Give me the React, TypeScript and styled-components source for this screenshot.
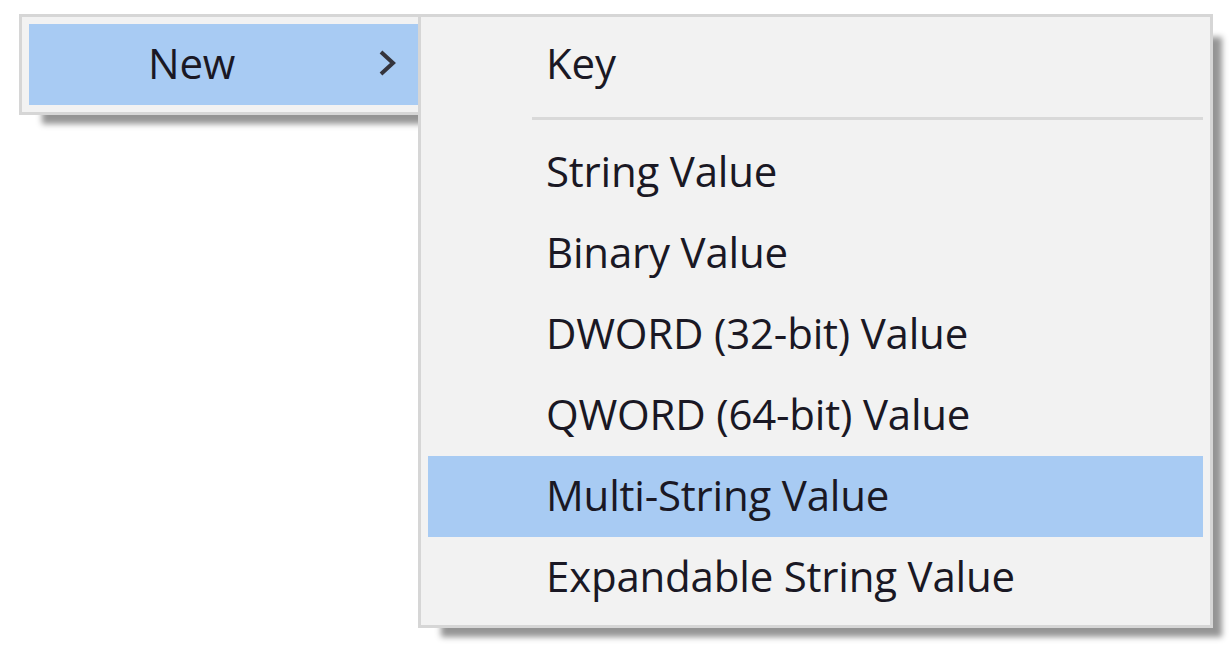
import { FunctionComponent } from "react";
import styled, { createGlobalStyle } from "styled-components";

const GlobalStyle = createGlobalStyle`
  html, body {
    margin: 0;
    padding: 0;
    background: #ffffff;
  }
  body {
    font-family: "Open Sans", "Noto Sans", "Liberation Sans", sans-serif;
  }
`;

const subItems = [
  "String Value",
  "Binary Value",
  "DWORD (32-bit) Value",
  "QWORD (64-bit) Value",
  "Multi-String Value",
  "Expandable String Value",
];

const ACTIVE = "Multi-String Value";

const Chevron = () => (
  <svg width="22" height="30" viewBox="0 0 22 30" fill="none">
    <polyline
      points="5,4 17,15 5,26"
      stroke="#34343c"
      strokeWidth="4"
      strokeLinejoin="miter"
      strokeLinecap="butt"
    />
  </svg>
);

const App: FunctionComponent = () => {
  return (
    <>
      <GlobalStyle />
      <Desktop>
        <ParentMenu>
          <MenuRow $active $withArrow>
            <span className="label">New</span>
            <span className="arrow">
              <Chevron />
            </span>
          </MenuRow>
        </ParentMenu>
        <SubMenu>
          <MenuRow>
            <span className="label">Key</span>
          </MenuRow>
          <Separator />
          {subItems.map((item) => (
            <MenuRow key={item} $active={item === ACTIVE}>
              <span className="label">{item}</span>
            </MenuRow>
          ))}
        </SubMenu>
      </Desktop>
    </>
  );
};

const Desktop = styled.div`
  display: flex;
  align-items: flex-start;
  padding: 14px 0 0 19px;
  width: 1230px;
  height: 646px;
  box-sizing: border-box;
  overflow: hidden;
`;

const MenuPanel = styled.div`
  box-sizing: border-box;
  background: #f2f2f2;
  border: 3px solid #d6d6d6;
  padding: 7px;
  box-shadow: 16px 16px 6px -7px rgba(0, 0, 0, 0.42);
`;

const ParentMenu = styled(MenuPanel)`
  width: 409px;
`;

const SubMenu = styled(MenuPanel)`
  width: 795px;
  margin-left: -10px;
  position: relative;
  z-index: 1;
`;

const MenuRow = styled.div<{ $active?: boolean; $withArrow?: boolean }>`
  display: flex;
  align-items: center;
  height: 81px;
  padding-left: ${({ $withArrow }) => ($withArrow ? "119px" : "118px")};
  padding-right: 20px;
  background: ${({ $active }) => ($active ? "#a8cbf3" : "transparent")};

  .label {
    font-size: 42px;
    font-weight: 500;
    color: #1a1824;
    letter-spacing: -0.2px;
    line-height: 1;
    padding-bottom: 3px;
    flex: 1;
  }

  .arrow {
    display: flex;
    align-items: center;
    margin-right: 0;
    margin-top: -4px;
  }
`;

const Separator = styled.div`
  height: 3px;
  margin: 12px 0 12px 104px;
  background: #d9d9d9;
`;

export default App;
